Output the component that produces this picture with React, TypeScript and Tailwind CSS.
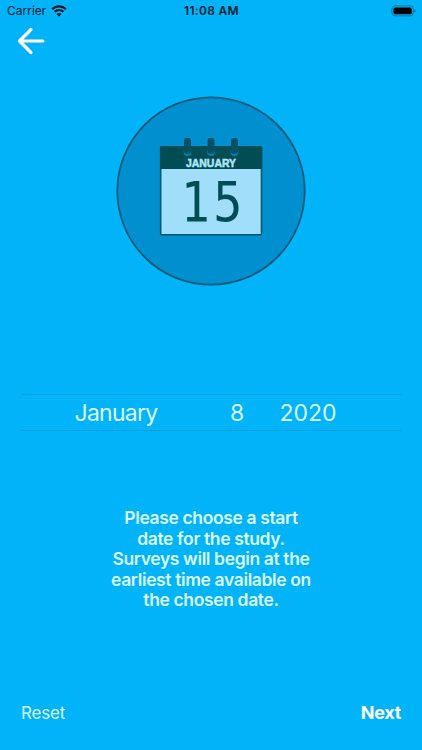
import React from "react";

const MESSAGE = [
  "Please choose a start",
  "date for the study.",
  "Surveys will begin at the",
  "earliest time available on",
  "the chosen date.",
];

export default function App() {
  return (
    <div className="flex h-[750px] w-[422px] flex-col overflow-hidden bg-[#01b3f9] font-['Inter','Liberation_Sans',sans-serif] text-[#d9faff]">
      <StatusBar />
      <header className="flex h-[38px] items-center pl-[17px]">
        <button type="button" aria-label="Back">
          <BackArrow />
        </button>
      </header>
      <main className="flex flex-1 flex-col items-center">
        <div className="mt-[36px]">
          <CalendarBadge />
        </div>
        <DatePicker month="January" day={8} year={2020} />
        <p className="mt-[77px] text-center text-[17.5px] font-semibold leading-[20.6px] tracking-[-0.37px]">
          {MESSAGE.map((line) => (
            <span key={line} className="block">
              {line}
            </span>
          ))}
        </p>
      </main>
      <footer className="flex h-[76px] items-center justify-between px-[21px]">
        <button type="button" className="pt-[3px] text-[17px] tracking-[-0.2px]">
          Reset
        </button>
        <button
          type="button"
          className="text-[18px] font-bold tracking-[-0.3px] text-white"
        >
          Next
        </button>
      </footer>
    </div>
  );
}

function StatusBar() {
  return (
    <div className="grid h-[22px] grid-cols-3 items-center pl-[7px] pr-[6px] text-[12px] text-[#03202c]">
      <div className="flex items-center gap-[5px]">
        <span>Carrier</span>
        <WifiIcon />
      </div>
      <span className="whitespace-nowrap text-center font-semibold tracking-[0.3px]">
        11:08 AM
      </span>
      <div className="flex justify-end">
        <BatteryIcon />
      </div>
    </div>
  );
}

function WifiIcon() {
  return (
    <svg width="16" height="12" viewBox="0 0 16 12" fill="none">
      <path d="M1.2 4.1a9.8 9.8 0 0 1 13.6 0" stroke="#03161f" strokeWidth="2.2" />
      <path d="M3.6 6.7a6.3 6.3 0 0 1 8.8 0" stroke="#03161f" strokeWidth="2" />
      <path d="M8 11.6 5.6 9.1a3.5 3.5 0 0 1 4.8 0Z" fill="#03161f" />
    </svg>
  );
}

function BatteryIcon() {
  return (
    <svg width="25" height="12" viewBox="0 0 25 12" fill="none">
      <rect x="0.9" y="0.9" width="21.4" height="10" rx="3" stroke="#0576a3" />
      <rect x="2.5" y="2.5" width="18.2" height="6.8" rx="1.6" fill="#000" />
      <path d="M23.4 4.4v3c.8-.3 1.2-.8 1.2-1.5s-.4-1.2-1.2-1.5Z" fill="#0576a3" />
    </svg>
  );
}

function BackArrow() {
  return (
    <svg width="28" height="28" viewBox="0 0 28 28" fill="none">
      <path
        d="M25.8 14H2.5M14 2.5 2.5 14 14 25.5"
        stroke="#fff"
        strokeWidth="3.2"
        strokeLinecap="round"
        strokeLinejoin="round"
      />
    </svg>
  );
}

function CalendarBadge() {
  return (
    <svg width="190" height="190" viewBox="0 0 190 190">
      <circle cx="95" cy="95" r="93.7" fill="#0190cf" stroke="#075b78" strokeWidth="1.8" />
      <rect x="44.7" y="51" width="100.8" height="87.8" rx="1" fill="#a0defa" stroke="#05586b" strokeWidth="1.6" />
      <path d="M44 51.2q0-1.2 1.2-1.2h99.8q1.2 0 1.2 1.2V73H44Z" fill="#004d54" />
      {[71.5, 95, 118.5].map((x) => (
        <g key={x}>
          <circle cx={x} cy="56" r="3.9" fill="#0380aa" />
          <rect x={x - 3.5} y="42" width="7" height="15.8" rx="2.4" fill="#045064" />
        </g>
      ))}
      <text
        x="95"
        y="70.5"
        textAnchor="middle"
        textLength="50"
        lengthAdjust="spacingAndGlyphs"
        fill="#b3e6fa"
        className="font-['Liberation_Sans',sans-serif] text-[10.5px] font-bold"
        stroke="#b3e6fa"
        strokeWidth="0.5"
      >
        JANUARY
      </text>
      <text
        x="-18.5 18.5"
        y="0"
        textAnchor="middle"
        transform="translate(95.5 124.7) scale(0.88 1)"
        fill="#004d54"
        className="font-['DejaVu_Sans_Mono',monospace] text-[55px]"
      >
        15
      </text>
    </svg>
  );
}

function DatePicker({
  month,
  day,
  year,
}: {
  month: string;
  day: number;
  year: number;
}) {
  return (
    <div className="mt-[108px] flex h-[37px] w-[379px] items-center border-y-[1.5px] border-[#039fdd] pt-px text-[23px] tracking-[-0.75px]">
      <span className="w-[180px] pl-[53px]">{month}</span>
      <span className="w-[42px] text-right">{day}</span>
      <span className="pl-[36px] tracking-[0px]">{year}</span>
    </div>
  );
}
